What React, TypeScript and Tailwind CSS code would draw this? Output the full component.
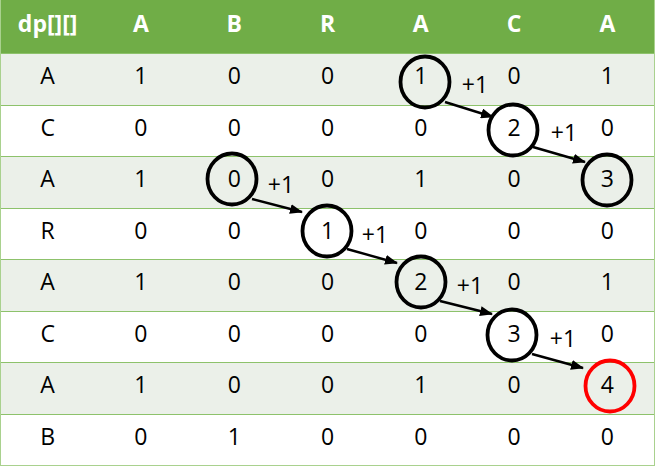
import React from "react";

const header = ["dp[][]", "A", "B", "R", "A", "C", "A"];
const rows: string[][] = [
  ["A", "1", "0", "0", "1", "0", "1"],
  ["C", "0", "0", "0", "0", "2", "0"],
  ["A", "1", "0", "0", "1", "0", "3"],
  ["R", "0", "0", "1", "0", "0", "0"],
  ["A", "1", "0", "0", "2", "0", "1"],
  ["C", "0", "0", "0", "0", "3", "0"],
  ["A", "1", "0", "0", "1", "0", "4"],
  ["B", "0", "1", "0", "0", "0", "0"],
];

const circles = [
  { x: 425, y: 82, red: false },
  { x: 513, y: 130, red: false },
  { x: 607, y: 180, red: false },
  { x: 232, y: 179, red: false },
  { x: 327, y: 231, red: false },
  { x: 421, y: 282, red: false },
  { x: 512, y: 335, red: false },
  { x: 610, y: 386, red: true },
];

const arrows = [
  [445, 102, 493, 117],
  [533, 147, 585, 162],
  [252, 199, 302, 212],
  [347, 249, 397, 263],
  [440, 301, 492, 314],
  [532, 354, 583, 368],
];

const plusOnes = [
  { x: 475, y: 84 },
  { x: 564, y: 132 },
  { x: 281, y: 184 },
  { x: 375, y: 234 },
  { x: 470, y: 285 },
  { x: 563, y: 338 },
];

export default function App() {
  return (
    <main className="relative h-[467px] w-[657px] overflow-hidden bg-white font-['Open_Sans',sans-serif] text-[23px] text-black">
      <div className="w-[655px] border-b border-l border-r border-[#a9d18e]">
        <div className="grid h-[53px] grid-cols-7 bg-[#70ad47] font-bold text-white">
          {header.map((h, i) => (
            <div key={i} className="flex items-center justify-center pb-[6px]">
              {h}
            </div>
          ))}
        </div>
        {rows.map((r, ri) => (
          <div
            key={ri}
            className={
              "grid h-[51.5px] grid-cols-7 border-t border-[#8dc26b] " +
              (ri % 2 === 0 ? "bg-[#ebf0e9]" : "bg-white")
            }
          >
            {r.map((c, ci) => (
              <div key={ci} className="flex items-center justify-center pb-[8px]">
                {c}
              </div>
            ))}
          </div>
        ))}
      </div>

      {/* circles and arrows drawn over the table */}
      <svg className="pointer-events-none absolute left-0 top-0" width="657" height="467">
        <defs>
          <marker id="head" markerWidth="13" markerHeight="10" refX="12" refY="5" orient="auto" markerUnits="userSpaceOnUse">
            <path d="M0,0 L13,5 L0,10 z" fill="#000" />
          </marker>
        </defs>
        {circles.map((c, i) => (
          <ellipse
            key={i}
            cx={c.x}
            cy={c.y}
            rx="24.5"
            ry="25.5"
            fill="none"
            stroke={c.red ? "#ff0000" : "#000"}
            strokeWidth="3.8"
          />
        ))}
        {arrows.map(([x1, y1, x2, y2], i) => (
          <line key={i} x1={x1} y1={y1} x2={x2} y2={y2} stroke="#000" strokeWidth="2.4" markerEnd="url(#head)" />
        ))}
      </svg>

      {plusOnes.map((p, i) => (
        <span
          key={i}
          className="absolute -translate-x-1/2 -translate-y-1/2 leading-none"
          style={{ left: p.x, top: p.y }}
        >
          +1
        </span>
      ))}
    </main>
  );
}
